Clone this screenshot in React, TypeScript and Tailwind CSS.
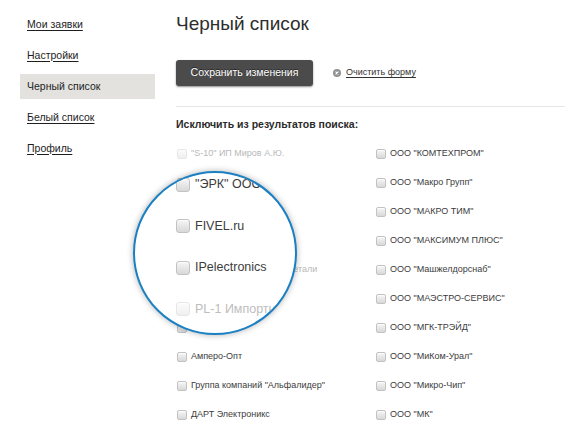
import React from 'react';

const menu = [
    { label: 'Мои заявки', active: false },
    { label: 'Настройки', active: false },
    { label: 'Черный список', active: true },
    { label: 'Белый список', active: false },
    { label: 'Профиль', active: false },
];

interface Company {
    name: string;
    disabled?: boolean;
}

const leftColumn: Company[] = [
    { name: '"S-10" ИП Миров А.Ю.', disabled: true },
    { name: '"ЭРК" ООО' },
    { name: 'FIVEL.ru' },
    { name: 'IPelectronics' },
    { name: 'PL-1 Импортные радиодетали', disabled: true },
    { name: 'Азимут' },
    { name: 'Акрон' },
    { name: 'Амперо-Опт' },
    { name: 'Группа компаний "Альфалидер"' },
    { name: 'ДАРТ Электроникс' },
];

const rightColumn: Company[] = [
    { name: 'ООО "КОМТЕХПРОМ"' },
    { name: 'ООО "Макро Групп"' },
    { name: 'ООО "МАКРО ТИМ"' },
    { name: 'ООО "МАКСИМУМ ПЛЮС"' },
    { name: 'ООО "Машжелдорснаб"' },
    { name: 'ООО "МАЭСТРО-СЕРВИС"' },
    { name: 'ООО "МГК-ТРЭЙД"' },
    { name: 'ООО "МиКом-Урал"' },
    { name: 'ООО "Микро-Чип"' },
    { name: 'ООО "МК"' },
];

// magnified rows shown inside the lens
const zoomed: Company[] = [
    { name: '"ЭРК" ООО' },
    { name: 'FIVEL.ru' },
    { name: 'IPelectronics' },
    { name: 'PL-1 Импортные радиодетали', disabled: true },
];

function Box({ big, disabled }: { big?: boolean; disabled?: boolean }) {
    return (
        <span
            className={`shrink-0 border border-[#c2c2c2] bg-gradient-to-b from-[#f6f6f6] to-[#d8d8d8] shadow-[inset_0_1px_1px_rgba(255,255,255,0.8)] ${
                big ? 'w-[14px] h-[14px] rounded-[3px]' : 'w-[10px] h-[10px] rounded-[2px]'
            } ${disabled ? 'opacity-40' : ''}`}
        />
    );
}

function CompanyRow({ company }: { company: Company }) {
    return (
        <label className="h-[29px] flex items-center">
            <Box disabled={company.disabled} />
            <span
                className={`ml-[4px] text-[9px] leading-[11px] whitespace-nowrap ${
                    company.disabled ? 'text-[#b8b8b8]' : 'text-[#3c3c3c]'
                }`}
            >
                {company.name}
            </span>
        </label>
    );
}

export default function App() {
    return (
        <div className="relative flex min-h-screen bg-white font-['Liberation_Sans',Arial,sans-serif] overflow-hidden">
            {/* Sidebar */}
            <nav className="w-[135px] ml-[20px] pt-[12px] flex flex-col gap-[6px] shrink-0">
                {menu.map(item => (
                    <a
                        key={item.label}
                        href="#"
                        className={`h-[25px] px-[7px] flex items-center text-[10.5px] text-[#1e1e1e] ${
                            item.active ? 'bg-[#e3e2de]' : 'underline underline-offset-[2px]'
                        }`}
                    >
                        {item.label}
                    </a>
                ))}
            </nav>

            {/* Main */}
            <main className="ml-[21px] flex-1 pt-[12px]">
                <h1 className="text-[19px] leading-[24px] text-[#2e2e2e]">Черный список</h1>

                <div className="mt-[24px] flex items-center">
                    <button className="w-[137px] h-[26px] rounded-[3px] bg-[#4b4b4b] text-white text-[10.5px] shadow-[0_1px_2px_rgba(0,0,0,0.45)] [text-shadow:0_-1px_0_rgba(0,0,0,0.5)]">
                        Сохранить изменения
                    </button>
                    <a href="#" className="ml-[20px] flex items-center gap-[5px] text-[9px] text-[#333] underline underline-offset-[2px]">
                        <svg width="8" height="8" viewBox="0 0 8 8">
                            <circle cx="4" cy="4" r="4" fill="#929292" />
                            <path d="M2.6 2.6 L5.4 5.4 M5.4 2.6 L2.6 5.4" stroke="#fff" strokeWidth="1.1" />
                        </svg>
                        Очистить форму
                    </a>
                </div>

                <div className="mt-[20px] border-t border-[#e6e6e6]" />

                <h2 className="mt-[10px] text-[10.5px] leading-[14px] font-bold text-[#2a2a2a]">
                    Исключить из результатов поиска:
                </h2>

                <div className="mt-[8px] grid grid-cols-[200px_200px]">
                    <div className="flex flex-col pl-[1px]">
                        {leftColumn.map(c => (
                            <CompanyRow key={c.name} company={c} />
                        ))}
                    </div>
                    <div className="flex flex-col">
                        {rightColumn.map(c => (
                            <CompanyRow key={c.name} company={c} />
                        ))}
                    </div>
                </div>
            </main>

            {/* Magnifier lens */}
            <div className="absolute left-[133px] top-[171px] w-[164px] h-[164px] rounded-full bg-white border-2 border-[#1b80c3] shadow-[0_0_6px_rgba(0,0,0,0.3)] overflow-hidden">
                <div className="mt-[-9px] ml-[41px] flex flex-col">
                    {zoomed.map(c => (
                        <div key={c.name} className="h-[41.5px] flex items-center">
                            <Box big disabled={c.disabled} />
                            <span
                                className={`ml-[5px] text-[12.5px] whitespace-nowrap ${
                                    c.disabled ? 'text-[#bdbdbd]' : 'text-[#3c3c3c]'
                                }`}
                            >
                                {c.name}
                            </span>
                        </div>
                    ))}
                </div>
            </div>
        </div>
    );
}
